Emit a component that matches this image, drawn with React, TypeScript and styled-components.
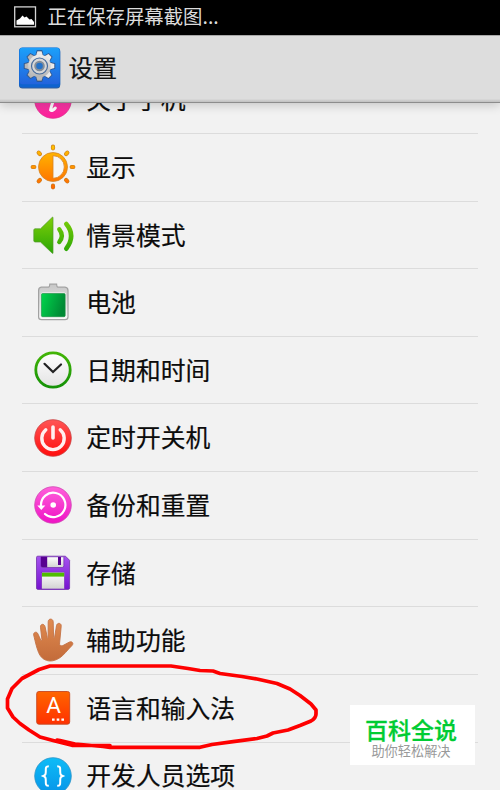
import * as React from "react";
import styled, { createGlobalStyle } from "styled-components";

const GlobalStyle = createGlobalStyle`
  body {
    margin: 0;
    background: #f2f2f2;
    font-family: "Noto Sans CJK SC", sans-serif;
  }
`;

const Screen = styled.div`
  position: relative;
  display: flex;
  flex-direction: column;
  width: 500px;
  height: 790px;
  overflow: hidden;
  background: #f2f2f2;
`;

const StatusBar = styled.div`
  flex: none;
  display: flex;
  align-items: center;
  gap: 10.4px;
  height: 35px;
  box-sizing: border-box;
  padding: 0 0 2px 14px;
  background: #000;
  color: #dcdcdc;
  font-size: 19.4px;
  line-height: 1;
  white-space: nowrap;
`;

const StatusText = styled.span`
  padding-bottom: 2px;
`;

const Header = styled.header`
  flex: none;
  display: flex;
  align-items: center;
  gap: 7.4px;
  height: 68px;
  box-sizing: border-box;
  padding: 0 0 1px 18px;
  border-top: 1px solid #a8a8a8;
  border-bottom: 1px solid #8c8c8c;
  background: linear-gradient(#dddddd 63px, #cfcfcf 64px, #c0c0c0);
  box-shadow: 0 2px 10px rgba(0, 0, 0, 0.2);
  z-index: 1;
`;

const Title = styled.h1`
  margin: 0;
  padding-bottom: 2px;
  color: #111;
  font-size: 24.4px;
  font-weight: 400;
  line-height: 1;
  -webkit-text-stroke: 0.2px #111;
`;

const Viewport = styled.main`
  flex: 1;
  min-height: 0;
  overflow: hidden;
`;

const List = styled.ul`
  margin: -36.6px 22px 0;
  padding: 0;
  list-style: none;
`;

const Item = styled.li`
  display: flex;
  align-items: center;
  gap: 11.6px;
  height: 67.62px;
  box-sizing: border-box;
  padding-left: 8.7px;
  border-bottom: 1px solid #dcdcdc;
`;

const Label = styled.span`
  padding-bottom: 2px;
  color: #0c0c0c;
  font-size: 24.8px;
  line-height: 1;
  white-space: nowrap;
  -webkit-text-stroke: 0.2px #0c0c0c;
`;

const IconSvg = styled.svg`
  flex: none;
  display: block;
  overflow: visible;
`;

const Marker = styled.svg`
  position: absolute;
  left: 0;
  top: 655px;
  z-index: 2;
`;

const Watermark = styled.div`
  position: absolute;
  left: 350px;
  top: 705px;
  z-index: 3;
  display: flex;
  flex-direction: column;
  align-items: center;
  gap: 2px;
  width: 125px;
  height: 60px;
  box-sizing: border-box;
  padding: 12px 3px 0 0;
  background: #fff;
`;

const WatermarkTitle = styled.strong`
  color: #00cc33;
  font-size: 23px;
  font-weight: 500;
  line-height: 24px;
  -webkit-text-stroke: 0.3px #00cc33;
`;

const WatermarkText = styled.span`
  color: #999;
  font-size: 13.2px;
  line-height: 15px;
`;

type GradientProps = { id: string; from: string; to: string; flat?: boolean };

const Gradient = ({ id, from, to, flat }: GradientProps) => (
  <linearGradient id={id} x1="0" y1="0" x2={flat ? 1 : 0} y2={flat ? 0.3 : 1}>
    <stop offset="0" stopColor={from} />
    <stop offset="1" stopColor={to} />
  </linearGradient>
);

const Icon = ({ children }: { children: React.ReactNode }) => (
  <IconSvg width="44" height="44" viewBox="0 0 44 44" fill="none">
    {children}
  </IconSvg>
);

const Disc = ({ id, from, to, edge }: GradientProps & { edge: string }) => (
  <>
    <Gradient id={id} from={from} to={to} />
    <circle cx="22" cy="22" r="18.3" fill={`url(#${id})`} stroke={edge} strokeWidth="0.8" />
  </>
);

const AboutIcon = () => (
  <Icon>
    <Disc id="about" from="#ff5fc0" to="#fb1d98" edge="#e0308f" />
    <circle cx="24.5" cy="11" r="2.6" fill="#fff" />
    <path d="M18 19.5c2-1.6 4.500-2.600 6-2-1 4-4 11-4.400 14.500 1 1.200 3.400-.4 4.600-2" stroke="#fff" strokeWidth="3" strokeLinecap="round" />
  </Icon>
);

const DisplayIcon = () => (
  <Icon>
    <linearGradient id="sun" gradientUnits="userSpaceOnUse" x1="0" y1="0" x2="0" y2="44">
      <stop offset="0" stopColor="#ffc400" />
      <stop offset="1" stopColor="#ff6500" />
    </linearGradient>
    <path
      d="M22 1.700V3.300M22 40.700V42.300M1.700 22H3.300M40.700 22H42.300M7.700 7.700L8.900 8.900M35.100 35.100L36.300 36.300M36.300 7.700L35.100 8.900M8.900 35.100L7.700 36.300"
      stroke="#c77a20"
      strokeWidth="4.2"
      strokeLinecap="round"
    />
    <path
      d="M22 1.700V3.300M22 40.700V42.300M1.700 22H3.300M40.700 22H42.300M7.700 7.700L8.900 8.900M35.100 35.100L36.300 36.300M36.300 7.700L35.100 8.900M8.900 35.100L7.700 36.300"
      stroke="url(#sun)"
      strokeWidth="3"
      strokeLinecap="round"
    />
    <circle cx="22" cy="22" r="14.500" fill="url(#sun)" stroke="#d4862a" strokeWidth="0.8" />
    <path d="M22 10.700a11.300 11.300 0 0 1 0 22.600z" fill="#f6f6f6" stroke="#d98322" strokeWidth="0.8" />
  </Icon>
);

const SoundIcon = () => (
  <Icon>
    <linearGradient id="sound" gradientUnits="userSpaceOnUse" x1="0" y1="4" x2="0" y2="41">
      <stop offset="0" stopColor="#7fcf08" />
      <stop offset="1" stopColor="#27a506" />
    </linearGradient>
    <path d="M3.600 15.800H9.500L21.300 4.300H22V40.300H21.300L9.500 29H3.600L2.800 28V16.800Z" fill="url(#sound)" stroke="#53992b" strokeWidth="0.7" />
    <path d="M28.300 16.300Q33.300 22.500 28.300 29" stroke="url(#sound)" strokeWidth="4.400" strokeLinecap="round" />
    <path d="M35.300 11Q45 22.500 35.300 35.700" stroke="url(#sound)" strokeWidth="4.600" strokeLinecap="round" />
  </Icon>
);

const BatteryIcon = () => (
  <Icon>
    <Gradient id="shell" from="#c6c6c6" to="#fbfbfb" />
    <Gradient id="charge" from="#00d64c" to="#008a35" flat />
    <path
      d="M10.300 6.200H17.600Q18.600 6 18.800 3.200H25.600Q25.800 6 26.800 6.200H34Q37 6.500 37 9.500V36Q37 38.700 34 38.700H10.600Q7.600 38.700 7.600 36V9.500Q7.600 6.500 10.300 6.200Z"
      fill="url(#shell)"
      stroke="#a2a2a2"
      strokeWidth="1.2"
    />
    <rect x="9.600" y="11.500" width="25.400" height="25.200" rx="2" fill="#f7f7f7" />
    <rect x="10.400" y="12.500" width="23.800" height="23.200" rx="1.200" fill="url(#charge)" stroke="#168a3c" strokeWidth="0.6" />
  </Icon>
);

const ClockIcon = () => (
  <Icon>
    <Gradient id="face" from="#ffffff" to="#e3e3e3" />
    <Gradient id="rim" from="#43b507" to="#159207" />
    <circle cx="22" cy="22" r="17.200" fill="url(#face)" stroke="url(#rim)" strokeWidth="2.800" />
    <path d="M13.500 15.800L22 24L30 16.500" stroke="#222" strokeWidth="2.200" strokeLinecap="round" />
  </Icon>
);

const PowerIcon = () => (
  <Icon>
    <Disc id="power" from="#ff5555" to="#ff0d0d" edge="#c94343" />
    <path d="M14.800 13.800A11.200 11.200 0 1 0 29.200 13.800" stroke="#fff0f0" strokeWidth="3.400" strokeLinecap="round" />
    <path d="M22 11V22" stroke="#fff0f0" strokeWidth="3.600" strokeLinecap="round" />
  </Icon>
);

const BackupIcon = () => (
  <Icon>
    <Disc id="backup" from="#ff61da" to="#ef12c5" edge="#cf47b4" />
    <path d="M10 22.500A12.200 12.200 0 1 1 14 31" stroke="#fff" strokeWidth="2.200" strokeLinecap="round" />
    <path d="M6.300 22.400H14.300L10.300 27Z" fill="#fff" />
    <circle cx="22.200" cy="22" r="2.800" fill="#fff" />
  </Icon>
);

const StorageIcon = () => (
  <Icon>
    <Gradient id="disk" from="#a653ef" to="#7713d0" />
    <Gradient id="metal" from="#ffffff" to="#d2d2d2" />
    <path d="M6.800 5.200H34.500L38.600 9.300V37Q38.600 38.400 37.200 38.400H6.800Q5.500 38.400 5.500 37V6.500Q5.500 5.200 6.800 5.200Z" fill="url(#disk)" stroke="#7132a8" strokeWidth="0.8" />
    <path d="M10 5.800H32.800V14.800Q32.800 16.500 31.200 16.500H11.600Q10 16.500 10 14.800Z" fill="url(#metal)" stroke="#6520a2" strokeWidth="0.6" />
    <path d="M10 5.800H16.200V16.300H11.500Q10 16.300 10 14.800ZM27 6H30V14H27Z" fill="#580091" />
    <rect x="10.600" y="21.200" width="22.900" height="16.800" fill="url(#metal)" stroke="#7420b8" strokeWidth="0.6" />
    <rect x="11" y="21.700" width="22.200" height="3.900" fill="#50bd00" />
  </Icon>
);

const HandIcon = () => (
  <Icon>
    <Gradient id="skin" from="#e08b50" to="#c36b3a" />
    <path
      d="M2.700 16C2.200 12.800 6.100 12.100 7.100 15.200L9.800 21.200Q10.700 22.300 10.900 20.500L9.500 8.300C9.100 4.800 13.100 4.200 14 7.500L16.300 18.500Q16.800 19.800 17.100 18.400L17.200 2.800C17.200-.8 22-.8 22.200 2.800L22.600 18.300Q23 19.800 23.600 18.300L25.500 6.700C26.100 3.200 30.600 3.800 30.200 7.200L28.500 25.200Q29.200 27.900 31.800 26.600L38.100 23.200C41.200 21.800 43 24.500 41 26.500C36.500 30.800 32.500 36.700 28.500 39C25.200 41 22.300 42 19.100 42C13.800 41.800 10.300 38.900 8.300 35C6.200 31 4.300 23 2.700 16Z"
      fill="url(#skin)"
      stroke="#c47346"
      strokeWidth="0.9"
    />
  </Icon>
);

const LanguageIcon = () => (
  <Icon>
    <Gradient id="lang" from="#ff6500" to="#ff3100" />
    <rect x="5.700" y="5.500" width="33" height="32.700" rx="2.200" fill="url(#lang)" stroke="#c74720" strokeWidth="0.900" />
    <text x="22.500" y="27.300" textAnchor="middle" fontFamily="Roboto, sans-serif" fontSize="22.500" fill="#fff">
      A
    </text>
    <path d="M21 32.400H23.600V34.800H21ZM25.700 32.400H28.300V34.800H25.700ZM30.400 32.400H33V34.800H30.400Z" fill="#fff" />
  </Icon>
);

const DeveloperIcon = () => (
  <Icon>
    <Disc id="dev" from="#0dbcf7" to="#0794e8" edge="#2d94c8" />
    <path
      d="M17.800 12.200C14.500 12.200 14.800 14 14.800 17C14.800 20 14.700 21 12.300 22C14.700 23 14.800 24 14.800 27C14.800 30 14.500 31.800 17.800 31.800M26.200 12.200C29.500 12.200 29.200 14 29.200 17C29.200 20 29.300 21 31.700 22C29.300 23 29.200 24 29.200 27C29.200 30 29.500 31.800 26.200 31.800"
      stroke="#fff"
      strokeWidth="2"
    />
  </Icon>
);

const SettingsIcon = () => (
  <IconSvg width="43" height="43" viewBox="0 0 43 43">
    <Gradient id="tile" from="#1ca0fa" to="#2263dc" />
    <Gradient id="steel" from="#ededed" to="#b5b5b5" />
    <rect x="1" y="1.500" width="41.200" height="40" rx="3.500" fill="#315f9c" />
    <rect x="1" y="0.500" width="41.200" height="40" rx="3.500" fill="#0e63cf" />
    <rect x="1.500" y="0.800" width="40.200" height="36.500" rx="3" fill="url(#tile)" />
    <g stroke="#315b96" strokeWidth="1.200">
      {[0, 45, 90, 135].map((angle) => (
        <path key={angle} d="M19.200 3.800H23.800L25.200 9V29L23.800 34.200H19.200L17.800 29V9Z" transform={`rotate(${angle} 21.500 19)`} />
      ))}
    </g>
    <g fill="url(#steel)">
      {[0, 45, 90, 135].map((angle) => (
        <path key={angle} d="M19.400 4.200H23.600L25 9V29L23.600 33.800H19.400L18 29V9Z" transform={`rotate(${angle} 21.500 19)`} />
      ))}
      <circle cx="21.500" cy="19" r="11.300" />
    </g>
    <circle cx="21.500" cy="19" r="8" fill="#d7d7d7" stroke="#486c9c" strokeWidth="1.200" />
    <circle cx="21.500" cy="19" r="4.300" fill="#2572c8" stroke="#838d98" strokeWidth="2" />
  </IconSvg>
);

const PictureIcon = () => (
  <IconSvg width="23" height="22" viewBox="0 0 23 22">
    <rect x="0.700" y="0.900" width="20.800" height="19.900" fill="none" stroke="#d4d4d4" strokeWidth="1.300" />
    <path d="M2.500 18.700V14.500L6 12.500L8.500 9.500L10.500 11.500L12.500 10.500L15.500 13.500L17.500 13L20 16V18.700Z" fill="#fff" />
  </IconSvg>
);

const settings = [
  { label: "关于手机", icon: AboutIcon },
  { label: "显示", icon: DisplayIcon },
  { label: "情景模式", icon: SoundIcon },
  { label: "电池", icon: BatteryIcon },
  { label: "日期和时间", icon: ClockIcon },
  { label: "定时开关机", icon: PowerIcon },
  { label: "备份和重置", icon: BackupIcon },
  { label: "存储", icon: StorageIcon },
  { label: "辅助功能", icon: HandIcon },
  { label: "语言和输入法", icon: LanguageIcon },
  { label: "开发人员选项", icon: DeveloperIcon },
];

const App = () => (
  <>
    <GlobalStyle />
    <Screen>
      <StatusBar>
        <PictureIcon />
        <StatusText>正在保存屏幕截图...</StatusText>
      </StatusBar>
      <Header>
        <SettingsIcon />
        <Title>设置</Title>
      </Header>
      <Viewport>
        <List>
          {settings.map(({ label, icon: RowIcon }) => (
            <Item key={label}>
              <RowIcon />
              <Label>{label}</Label>
            </Item>
          ))}
        </List>
      </Viewport>
      <Marker width="330" height="100" viewBox="0 655 330 100" fill="none">
        <path
          d="M57 740L60 740.500L75 744L103 746.500L110 747.300H200L212 744.500L233 741.700L257 738.500L267 736L273 733L288 730L300 725.500L311 721Q316 718 316 714V710L311 704L300 695.500L290 689L277 683.500L257 679L242 676.500L220 673.500L213 671L200 670.500L188 668.500L171 666H50L39 669.500L22 678.500L12 688.500L7.500 699V708L13 717L20 723.500L29 730L40 737L54 740.800L72 745.300L110 745.500"
          stroke="#fe0000"
          strokeWidth="3.700"
          strokeLinejoin="round"
          strokeLinecap="round"
        />
      </Marker>
      <Watermark>
        <WatermarkTitle>百科全说</WatermarkTitle>
        <WatermarkText>助你轻松解决</WatermarkText>
      </Watermark>
    </Screen>
  </>
);

export default App;
